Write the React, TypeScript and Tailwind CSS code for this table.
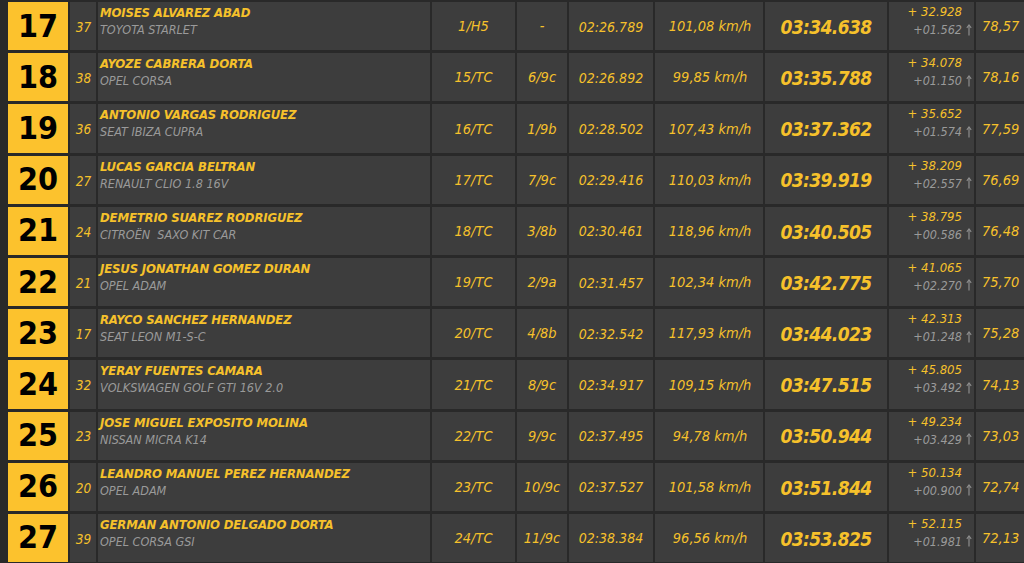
import React from "react";

type Row = {
  pos: number;
  num: string;
  name: string;
  car: string;
  cls: string;
  grp: string;
  t1: string;
  speed: string;
  total: string;
  diff: string;
  prev: string;
  pct: string;
};

const rows: Row[] = [
  { pos: 17, num: "37", name: "MOISES ALVAREZ ABAD", car: "TOYOTA STARLET", cls: "1/H5", grp: "-", t1: "02:26.789", speed: "101,08 km/h", total: "03:34.638", diff: "+ 32.928", prev: "+01.562", pct: "78,57" },
  { pos: 18, num: "38", name: "AYOZE CABRERA DORTA", car: "OPEL CORSA", cls: "15/TC", grp: "6/9c", t1: "02:26.892", speed: "99,85 km/h", total: "03:35.788", diff: "+ 34.078", prev: "+01.150", pct: "78,16" },
  { pos: 19, num: "36", name: "ANTONIO VARGAS RODRIGUEZ", car: "SEAT IBIZA CUPRA", cls: "16/TC", grp: "1/9b", t1: "02:28.502", speed: "107,43 km/h", total: "03:37.362", diff: "+ 35.652", prev: "+01.574", pct: "77,59" },
  { pos: 20, num: "27", name: "LUCAS GARCIA BELTRAN", car: "RENAULT CLIO 1.8 16V", cls: "17/TC", grp: "7/9c", t1: "02:29.416", speed: "110,03 km/h", total: "03:39.919", diff: "+ 38.209", prev: "+02.557", pct: "76,69" },
  { pos: 21, num: "24", name: "DEMETRIO SUAREZ RODRIGUEZ", car: "CITROËN  SAXO KIT CAR", cls: "18/TC", grp: "3/8b", t1: "02:30.461", speed: "118,96 km/h", total: "03:40.505", diff: "+ 38.795", prev: "+00.586", pct: "76,48" },
  { pos: 22, num: "21", name: "JESUS JONATHAN GOMEZ DURAN", car: "OPEL ADAM", cls: "19/TC", grp: "2/9a", t1: "02:31.457", speed: "102,34 km/h", total: "03:42.775", diff: "+ 41.065", prev: "+02.270", pct: "75,70" },
  { pos: 23, num: "17", name: "RAYCO SANCHEZ HERNANDEZ", car: "SEAT LEON M1-S-C", cls: "20/TC", grp: "4/8b", t1: "02:32.542", speed: "117,93 km/h", total: "03:44.023", diff: "+ 42.313", prev: "+01.248", pct: "75,28" },
  { pos: 24, num: "32", name: "YERAY FUENTES CAMARA", car: "VOLKSWAGEN GOLF GTI 16V 2.0", cls: "21/TC", grp: "8/9c", t1: "02:34.917", speed: "109,15 km/h", total: "03:47.515", diff: "+ 45.805", prev: "+03.492", pct: "74,13" },
  { pos: 25, num: "23", name: "JOSE MIGUEL EXPOSITO MOLINA", car: "NISSAN MICRA K14", cls: "22/TC", grp: "9/9c", t1: "02:37.495", speed: "94,78 km/h", total: "03:50.944", diff: "+ 49.234", prev: "+03.429", pct: "73,03" },
  { pos: 26, num: "20", name: "LEANDRO MANUEL PEREZ HERNANDEZ", car: "OPEL ADAM", cls: "23/TC", grp: "10/9c", t1: "02:37.527", speed: "101,58 km/h", total: "03:51.844", diff: "+ 50.134", prev: "+00.900", pct: "72,74" },
  { pos: 27, num: "39", name: "GERMAN ANTONIO DELGADO DORTA", car: "OPEL CORSA GSI", cls: "24/TC", grp: "11/9c", t1: "02:38.384", speed: "96,56 km/h", total: "03:53.825", diff: "+ 52.115", prev: "+01.981", pct: "72,13" },
];

function UpArrow({ hidden }: { hidden?: boolean }) {
  return (
    <svg
      width="6"
      height="12"
      viewBox="0 0 6 12"
      className={hidden ? "invisible ml-[4px]" : "ml-[4px]"}
      aria-hidden="true"
    >
      <path d="M3 1.2 L3 11.5" stroke="#8e8e8e" strokeWidth="1.2" fill="none" />
      <path d="M0.8 3.8 L3 1 L5.2 3.8" stroke="#8e8e8e" strokeWidth="1.1" fill="none" />
    </svg>
  );
}

const cell = "bg-[#3d3d3d]";
const centered = "bg-[#3d3d3d] flex items-center justify-center pt-[2px]";

export default function App() {
  return (
    <div className="w-[1024px] h-[563px] overflow-hidden bg-[#292929] font-['DejaVu_Sans_Condensed','DejaVu_Sans',sans-serif] text-[#f6c12b]">
      <div className="grid grid-cols-[60px_26px_332px_83px_50px_84px_108px_122px_85px_48px] auto-rows-[48.2px] gap-x-[2px] gap-y-[3px] pl-[8px] pt-[2px]">
        {rows.map((r) => (
          <React.Fragment key={r.pos}>
            <div className="bg-[#fcc22d] flex items-center justify-center text-black font-bold text-[32px] leading-none pb-[1px]">
              {r.pos}
            </div>
            <div className={centered + " italic text-[13.5px] pl-[1px]"}>{r.num}</div>
            <div className={cell + " pl-[2px] pt-[3px] italic leading-[16px]"}>
              <div className="font-bold text-[13px] tracking-[-0.15px]">{r.name}</div>
              <div className="mt-[1px] text-[12.5px] text-[#9a9a9a] whitespace-pre">{r.car}</div>
            </div>
            <div className={centered + " italic text-[14.5px]"}>{r.cls}</div>
            <div className={centered + " italic text-[14.5px]"}>{r.grp}</div>
            <div className={centered + " italic text-[14px]"}>{r.t1}</div>
            <div className={centered + " italic text-[14.5px] pl-[2px]"}>{r.speed}</div>
            <div className={centered + " italic font-bold text-[19px] tracking-[-0.6px]"}>{r.total}</div>
            <div className={cell + " flex flex-col items-end pt-[2px] pr-[2px] italic"}>
              <div className="flex items-center leading-[16px] text-[13px]">
                <span>{r.diff}</span>
                <UpArrow hidden />
              </div>
              <div className="flex items-center leading-[17px] mt-[1px] text-[12.5px] text-[#9a9a9a]">
                <span>{r.prev}</span>
                <UpArrow />
              </div>
            </div>
            <div className={cell + " flex items-center pl-[6px] pt-[2px] italic text-[14.5px]"}>{r.pct}</div>
          </React.Fragment>
        ))}
      </div>
    </div>
  );
}
